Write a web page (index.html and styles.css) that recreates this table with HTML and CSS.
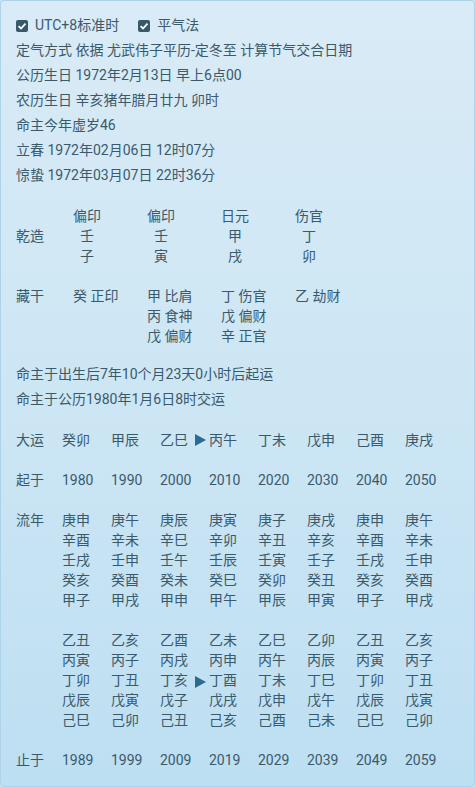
FILE: index.html
```html
<!DOCTYPE html>
<html lang="zh">
<head>
<meta charset="utf-8">
<link rel="stylesheet" href="styles.css">
</head>
<body>
<div class="panel">
  <div class="lines">
    <div class="opts">
      <label class="opt"><span class="cb"><svg viewBox="0 0 12 12" width="12" height="12"><path d="M2.6 6.2 L5 8.5 L9.5 3.6" fill="none" stroke="#fff" stroke-width="1.8"/></svg></span>UTC+8标准时</label>
      <label class="opt"><span class="cb"><svg viewBox="0 0 12 12" width="12" height="12"><path d="M2.6 6.2 L5 8.5 L9.5 3.6" fill="none" stroke="#fff" stroke-width="1.8"/></svg></span>平气法</label>
    </div>
    <div>定气方式 依据 尤武伟子平历-定冬至 计算节气交合日期</div>
    <div>公历生日 1972年2月13日 早上6点00</div>
    <div>农历生日 辛亥猪年腊月廿九 卯时</div>
    <div>命主今年虚岁46</div>
    <div>立春 1972年02月06日 12时07分</div>
    <div>惊蛰 1972年03月07日 22时36分</div>
  </div>

  <div class="pillars">
    <div></div><div class="pc">偏印</div><div class="pc">偏印</div><div class="pc">日元</div><div class="pc">伤官</div>
    <div>乾造</div><div class="pc">壬</div><div class="pc">壬</div><div class="pc">甲</div><div class="pc">丁</div>
    <div></div><div class="pc">子</div><div class="pc">寅</div><div class="pc">戌</div><div class="pc">卯</div>
  </div>

  <div class="canggan">
    <div>藏干</div>
    <div>癸 正印</div>
    <div>甲 比肩<br>丙 食神<br>戊 偏财</div>
    <div>丁 伤官<br>戊 偏财<br>辛 正官</div>
    <div>乙 劫财</div>
  </div>

  <div class="lines qiyun">
    <div>命主于出生后7年10个月23天0小时后起运</div>
    <div>命主于公历1980年1月6日8时交运</div>
  </div>

  <div class="dy">
    <div>大运</div>
    <div>癸卯</div><div>甲辰</div><div>乙巳</div><div class="cur"><span class="tri"><svg viewBox="0 0 11 12" width="11" height="12"><path d="M0 0 L11 6 L0 12 Z" fill="#2b6a92"/></svg></span>丙午</div><div>丁未</div><div>戊申</div><div>己酉</div><div>庚戌</div>
  </div>

  <div class="dy gap">
    <div>起于</div>
    <div>1980</div><div>1990</div><div>2000</div><div>2010</div><div>2020</div><div>2030</div><div>2040</div><div>2050</div>
  </div>

  <div class="dy gap">
    <div>流年</div>
    <div>庚申<br>辛酉<br>壬戌<br>癸亥<br>甲子</div>
    <div>庚午<br>辛未<br>壬申<br>癸酉<br>甲戌</div>
    <div>庚辰<br>辛巳<br>壬午<br>癸未<br>甲申</div>
    <div>庚寅<br>辛卯<br>壬辰<br>癸巳<br>甲午</div>
    <div>庚子<br>辛丑<br>壬寅<br>癸卯<br>甲辰</div>
    <div>庚戌<br>辛亥<br>壬子<br>癸丑<br>甲寅</div>
    <div>庚申<br>辛酉<br>壬戌<br>癸亥<br>甲子</div>
    <div>庚午<br>辛未<br>壬申<br>癸酉<br>甲戌</div>
  </div>

  <div class="dy gap">
    <div></div>
    <div>乙丑<br>丙寅<br>丁卯<br>戊辰<br>己巳</div>
    <div>乙亥<br>丙子<br>丁丑<br>戊寅<br>己卯</div>
    <div>乙酉<br>丙戌<br>丁亥<br>戊子<br>己丑</div>
    <div>乙未<br>丙申<br><span class="cur"><span class="tri"><svg viewBox="0 0 11 12" width="11" height="12"><path d="M0 0 L11 6 L0 12 Z" fill="#2b6a92"/></svg></span>丁酉</span><br>戊戌<br>己亥</div>
    <div>乙巳<br>丙午<br>丁未<br>戊申<br>己酉</div>
    <div>乙卯<br>丙辰<br>丁巳<br>戊午<br>己未</div>
    <div>乙丑<br>丙寅<br>丁卯<br>戊辰<br>己巳</div>
    <div>乙亥<br>丙子<br>丁丑<br>戊寅<br>己卯</div>
  </div>

  <div class="dy gap">
    <div>止于</div>
    <div>1989</div><div>1999</div><div>2009</div><div>2019</div><div>2029</div><div>2039</div><div>2049</div><div>2059</div>
  </div>
</div>
</body>
</html>
```

FILE: styles.css
```css
html, body {
  margin: 0;
  padding: 0;
}
body {
  font-family: "Roboto", "Noto Sans CJK SC", sans-serif;
  font-size: 14px;
  color: #3a5a6c;
  background: #c9e4f4;
}
.panel {
  box-sizing: border-box;
  width: 475px;
  height: 787px;
  padding: 12px 15px 0 15px;
  border: 1px solid #acd3ea;
  border-radius: 4px;
  background: linear-gradient(180deg, #d9ebf6 0%, #cde6f4 50%, #bddff2 100%);
}
.lines > div {
  line-height: 25px;
  white-space: nowrap;
}
.opts {
  display: flex;
  align-items: center;
  gap: 19px;
}
.opt {
  display: flex;
  align-items: center;
  gap: 7px;
}
.cb {
  display: inline-flex;
  width: 12px;
  height: 12px;
  border-radius: 2px;
  background: #38586c;
}
.pillars {
  margin-top: 18px;
  display: grid;
  grid-template-columns: 57px repeat(4, 74px);
  line-height: 20px;
}
.pc {
  width: 28px;
  text-align: center;
}
.canggan {
  margin-top: 20px;
  display: grid;
  grid-template-columns: 57px repeat(4, 74px);
  line-height: 20px;
}
.qiyun {
  margin-top: 16px;
}
.dy {
  margin-top: 18px;
  display: grid;
  grid-template-columns: 46px repeat(8, 49px);
  line-height: 20px;
  white-space: nowrap;
}
.dy.gap {
  margin-top: 20px;
}
.cur {
  position: relative;
}
.tri {
  position: absolute;
  left: -14px;
  top: 4px;
  width: 11px;
  height: 12px;
  display: block;
}
.tri svg {
  display: block;
}
```
